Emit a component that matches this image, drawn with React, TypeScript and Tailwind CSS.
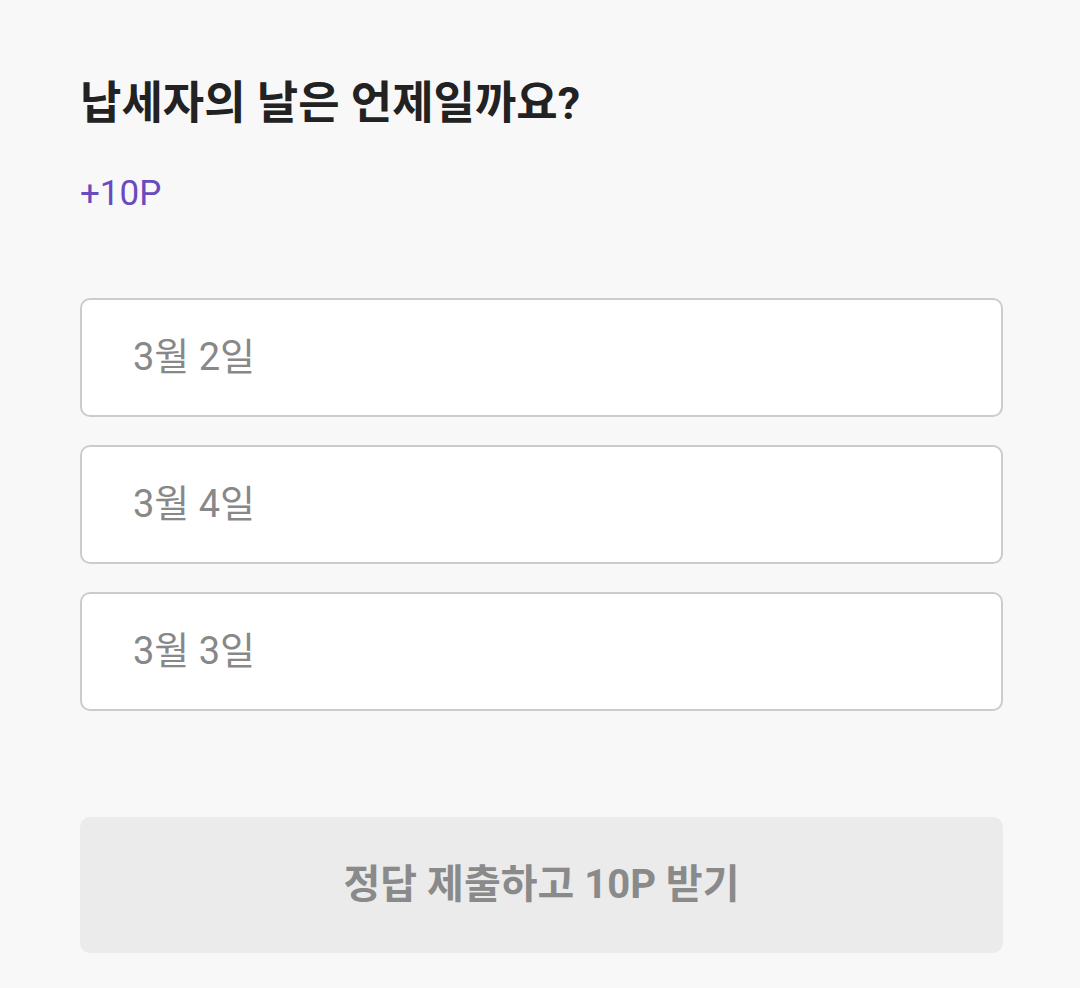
const FONT = "font-['Roboto','Noto_Sans_CJK_KR',sans-serif]";

const options = ["3월 2일", "3월 4일", "3월 3일"];

export default function App() {
  return (
    <div className={`min-h-[988px] w-full bg-[#f8f8f8] px-[80px] pt-[78px] ${FONT}`}>
      <h1 className="text-[45px] font-bold leading-[52px] text-[#222222]">납세자의 날은 언제일까요?</h1>
      <p className="mt-[42px] text-[35px] leading-[44px] text-[#6a4bbd]">+10P</p>

      <div className="mt-[82px] flex w-[923px] flex-col gap-[28px]">
        {options.map((label) => (
          <button
            key={label}
            className="flex h-[119px] items-center rounded-[10px] border-2 border-[#cccccc] bg-white pl-[51px] text-left text-[38px] text-[#888888]"
          >
            {label}
          </button>
        ))}
      </div>

      <button className="mt-[106px] flex h-[136px] w-[923px] items-center justify-center rounded-[10px] bg-[#ebebeb] text-[40px] font-bold text-[#8a8a8a]">
        정답 제출하고 10P 받기
      </button>
    </div>
  );
}
